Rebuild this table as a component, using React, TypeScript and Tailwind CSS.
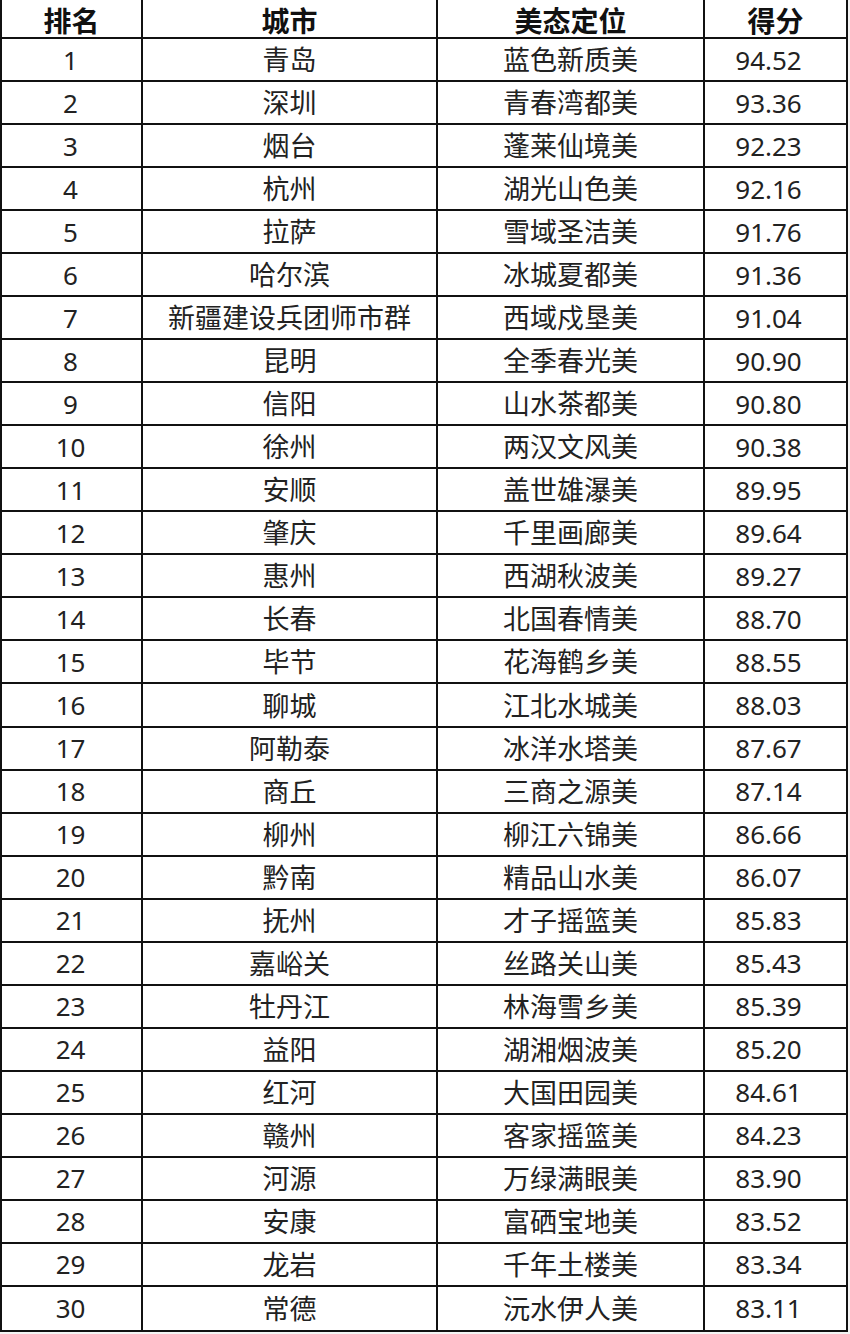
import React from "react";

const rows: [string, string, string][] = [
  ["青岛", "蓝色新质美", "94.52"],
  ["深圳", "青春湾都美", "93.36"],
  ["烟台", "蓬莱仙境美", "92.23"],
  ["杭州", "湖光山色美", "92.16"],
  ["拉萨", "雪域圣洁美", "91.76"],
  ["哈尔滨", "冰城夏都美", "91.36"],
  ["新疆建设兵团师市群", "西域戍垦美", "91.04"],
  ["昆明", "全季春光美", "90.90"],
  ["信阳", "山水茶都美", "90.80"],
  ["徐州", "两汉文风美", "90.38"],
  ["安顺", "盖世雄瀑美", "89.95"],
  ["肇庆", "千里画廊美", "89.64"],
  ["惠州", "西湖秋波美", "89.27"],
  ["长春", "北国春情美", "88.70"],
  ["毕节", "花海鹤乡美", "88.55"],
  ["聊城", "江北水城美", "88.03"],
  ["阿勒泰", "冰洋水塔美", "87.67"],
  ["商丘", "三商之源美", "87.14"],
  ["柳州", "柳江六锦美", "86.66"],
  ["黔南", "精品山水美", "86.07"],
  ["抚州", "才子摇篮美", "85.83"],
  ["嘉峪关", "丝路关山美", "85.43"],
  ["牡丹江", "林海雪乡美", "85.39"],
  ["益阳", "湖湘烟波美", "85.20"],
  ["红河", "大国田园美", "84.61"],
  ["赣州", "客家摇篮美", "84.23"],
  ["河源", "万绿满眼美", "83.90"],
  ["安康", "富硒宝地美", "83.52"],
  ["龙岩", "千年土楼美", "83.34"],
  ["常德", "沅水伊人美", "83.11"],
];

const font = { fontFamily: '"Noto Sans", "Noto Sans CJK SC", sans-serif' };

export default function App() {
  return (
    <div className="w-[850px] h-[1334px] bg-[#f4f4f4]">
      <div
        className="w-[848px] h-[1332px] bg-white border-l-2 border-b-2 border-[#111] grid grid-cols-[141px_295px_267px_143px] grid-rows-[39px_repeat(30,1fr)] text-[#222]"
        style={font}
      >
        {["排名", "城市", "美态定位", "得分"].map((h) => (
          <div
            key={h}
            className="border-r-2 border-b-2 border-[#111] flex items-center justify-center pt-1 text-[28px] font-bold text-[#111] leading-none"
          >
            {h}
          </div>
        ))}
        {rows.map((r, i) => (
          <React.Fragment key={i}>
            <div className={`border-r-2 ${i < 29 ? "border-b-2" : ""} border-[#111] flex items-center justify-center pr-[2px] text-[26px] leading-none`}>
              {i + 1}
            </div>
            <div className={`border-r-2 ${i < 29 ? "border-b-2" : ""} border-[#111] flex items-center justify-center text-[27px] leading-none`}>
              {r[0]}
            </div>
            <div className={`border-r-2 ${i < 29 ? "border-b-2" : ""} border-[#111] flex items-center justify-center text-[27px] leading-none`}>
              {r[1]}
            </div>
            <div className={`border-r-2 ${i < 29 ? "border-b-2" : ""} border-[#111] flex items-center justify-center pr-[14px] text-[26px] leading-none`}>
              {r[2]}
            </div>
          </React.Fragment>
        ))}
      </div>
    </div>
  );
}
